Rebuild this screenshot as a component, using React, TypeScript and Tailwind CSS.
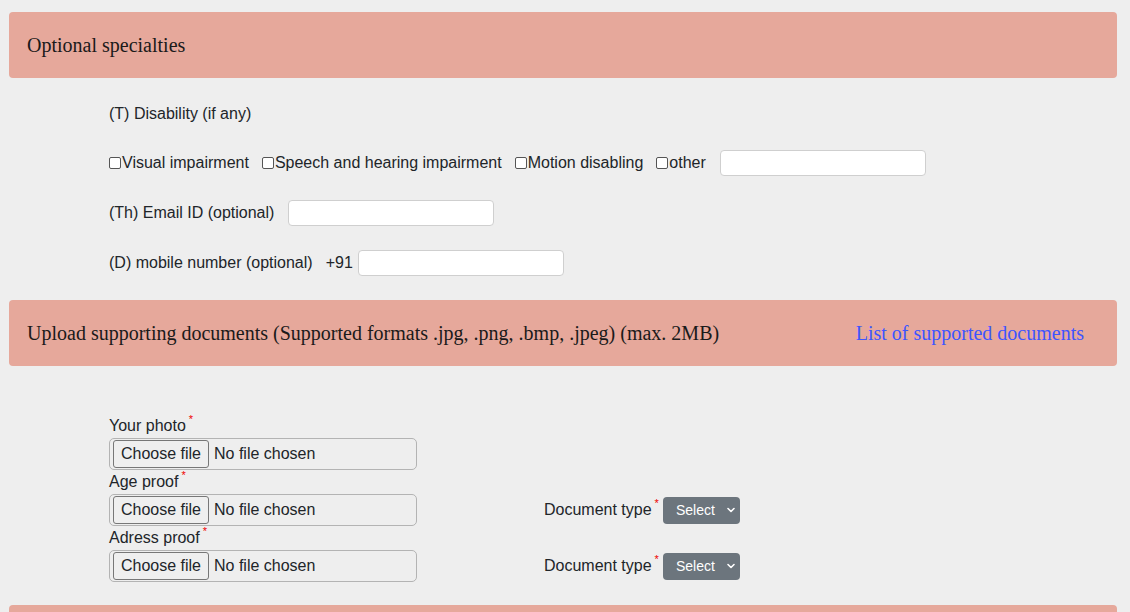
import React from "react";

const Header = ({ children }: { children: React.ReactNode }) => (
  <div className="ml-[9px] mr-[13px] h-[66px] rounded-[4px] bg-[#e6a89b] px-[18px] flex items-center justify-between font-['Liberation_Serif',serif] text-[20px] text-[#1a1a1a]">
    {children}
  </div>
);

const Check = ({ label }: { label: string }) => (
  <span className="flex items-center mr-[13px]">
    <span className="inline-block w-[12px] h-[12px] rounded-[2px] border border-[#555] bg-white mr-[1px]" />
    <span>{label}</span>
  </span>
);

const TextBox = ({ className = "" }: { className?: string }) => (
  <div className={"w-[206px] h-[26px] bg-white border border-[#cfcfcf] rounded-[4px] " + className} />
);

const Star = () => <span className="text-[#e00] text-[11px] ml-[3px] self-start relative top-[-3px] leading-[16px]">*</span>;

const FileInput = () => (
  <div className="w-[308px] h-[32px] border border-[#b3b3b3] rounded-[5px] flex items-center pl-[3px]">
    <div className="h-[28px] w-[96px] border border-[#777] rounded-[3px] bg-[#efefef] flex items-center justify-center">
      Choose file
    </div>
    <span className="ml-[5px]">No file chosen</span>
  </div>
);

const Select = () => (
  <div className="w-[77px] h-[27px] rounded-[4px] bg-[#6c757d] text-white text-[14px] flex items-center pl-[13px] pr-[4px] justify-between">
    <span>Select</span>
    <svg width="10" height="10" viewBox="0 0 10 10">
      <path d="M2 3.5 L5 6.5 L8 3.5" stroke="white" strokeWidth="1.6" fill="none" strokeLinecap="round" strokeLinejoin="round" />
    </svg>
  </div>
);

const DocType = () => (
  <div className="flex items-center">
    <div className="flex h-[24px] items-center">
      <span>Document type</span>
      <Star />
    </div>
    <span className="ml-[4px]">
      <Select />
    </span>
  </div>
);

export default function App() {
  return (
    <div className="w-[1130px] h-[612px] overflow-hidden bg-[#eeeeee] pt-[12px] font-['Liberation_Sans',Arial,sans-serif] text-[16px] text-[#212529]">
      <Header>
        <span>Optional specialties</span>
      </Header>
      <div className="pl-[109px] pt-[11px] pb-[12px]">
        <div className="h-[49px] flex items-center">(T) Disability (if any)</div>
        <div className="h-[50px] flex items-center">
          <Check label="Visual impairment" />
          <Check label="Speech and hearing impairment" />
          <Check label="Motion disabling" />
          <Check label="other" />
          <TextBox className="ml-[1px]" />
        </div>
        <div className="h-[50px] flex items-center">
          <span className="mr-[14px]">(Th) Email ID (optional)</span>
          <TextBox />
        </div>
        <div className="h-[50px] flex items-center">
          <span className="mr-[13px]">(D) mobile number (optional)</span>
          <span className="mr-[5px]">+91</span>
          <TextBox />
        </div>
      </div>
      <Header>
        <span>Upload supporting documents (Supported formats .jpg, .png, .bmp, .jpeg) (max. 2MB)</span>
        <span className="text-[#3d55ff] mr-[15px]">List of supported documents</span>
      </Header>
      <div className="pl-[109px] pt-[48px] pb-[23px]">
        <div className="h-[24px] flex items-center">
          Your photo
          <Star />
        </div>
        <FileInput />
        <div className="h-[24px] flex items-center">
          Age proof
          <Star />
        </div>
        <div className="flex items-center">
          <div className="w-[435px]">
            <FileInput />
          </div>
          <DocType />
        </div>
        <div className="h-[24px] flex items-center">
          Adress proof
          <Star />
        </div>
        <div className="flex items-center">
          <div className="w-[435px]">
            <FileInput />
          </div>
          <DocType />
        </div>
      </div>
      <Header>
        <span>&nbsp;</span>
      </Header>
    </div>
  );
}
